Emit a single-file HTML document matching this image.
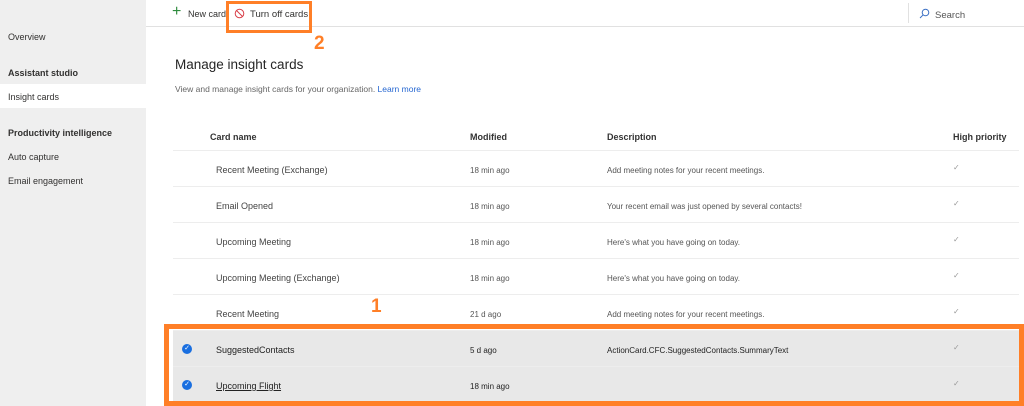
<!DOCTYPE html>
<html><head><meta charset="utf-8"><style>
*{margin:0;padding:0;box-sizing:border-box}
body{width:1024px;height:406px;overflow:hidden;background:#fff;font-family:"Liberation Sans",sans-serif;color:#323130;position:relative}
.side{position:absolute;left:0;top:0;width:146px;height:406px;background:#efefef;font-size:9px}
.side div{position:absolute;left:8px}
.top{position:absolute;left:146px;top:0;right:0;height:27px;border-bottom:1px solid #e1e1e1;font-size:9.5px}
.abs{position:absolute}
.row{position:absolute;left:173px;width:846px;height:36px;border-bottom:1px solid #ededed;font-size:8px;color:#555}
.row span{position:absolute;top:15px}
.row .n{left:43px;font-size:9px;color:#444;top:14px}
.row .m{left:297px}.row .d{left:434px}
.row .c{left:780px;top:12px;color:#999;font-size:8px}
.sel{background:#e8e8e8}
.dot{position:absolute;left:9px;top:13px;width:10px;height:10px;border-radius:50%;background:#1a6fe0;color:#fff;font-size:7px;line-height:10px;text-align:center}
</style></head><body>
<div class="side">
<div style="top:32px">Overview</div>
<div style="top:68px;font-weight:bold">Assistant studio</div>
<div style="left:0;top:84px;width:146px;height:24px;background:#fff"></div>
<div style="top:92px">Insight cards</div>
<div style="top:128px;font-weight:bold">Productivity intelligence</div>
<div style="top:152px">Auto capture</div>
<div style="top:176px">Email engagement</div>
</div>
<div class="top">
<div class="abs" style="left:26px;top:4px;color:#2e8b3e;font-size:16px;line-height:16px">+</div>
<div class="abs" style="left:42px;top:9px;font-size:9px">New card</div>
<svg class="abs" style="left:88px;top:8px" width="11" height="11" viewBox="0 0 11 11"><circle cx="5.5" cy="5.5" r="4.3" fill="none" stroke="#d9404a" stroke-width="1"/><line x1="2.5" y1="2.5" x2="8.5" y2="8.5" stroke="#d9404a"/></svg>
<div class="abs" style="left:104px;top:9px">Turn off cards</div>
<div class="abs" style="left:762px;top:3px;width:1px;height:20px;background:#e1e1e1"></div>
<svg class="abs" style="left:773px;top:8px" width="11" height="11" viewBox="0 0 11 11"><circle cx="6.5" cy="4.5" r="3.3" fill="none" stroke="#3a6fc4"/><line x1="4.2" y1="6.8" x2="1" y2="10" stroke="#3a6fc4"/></svg>
<div class="abs" style="left:789px;top:10px;color:#555">Search</div>
</div>
<div class="abs" style="left:226px;top:1px;width:86px;height:32px;border:3px solid #ff7f27"></div>
<div class="abs" style="left:314px;top:33px;color:#ff7f27;font-weight:bold;font-size:19px">2</div>
<div class="abs" style="left:175px;top:57px;font-size:13.5px;color:#252525">Manage insight cards</div>
<div class="abs" style="left:175px;top:84px;font-size:8.5px;color:#666">View and manage insight cards for your organization. <span style="color:#2667d1">Learn more</span></div>
<div class="row" style="top:115px;font-weight:bold;color:#333">
<span style="left:37px;top:17px;font-size:9px">Card name</span><span class="m" style="top:17px;font-size:9px">Modified</span><span class="d" style="top:17px;font-size:9px">Description</span><span style="left:780px;top:17px;font-size:9px">High priority</span></div>
<div class="row" style="top:151px"><span class="n">Recent Meeting (Exchange)</span><span class="m">18 min ago</span><span class="d">Add meeting notes for your recent meetings.</span><span class="c">✓</span></div>
<div class="row" style="top:187px"><span class="n">Email Opened</span><span class="m">18 min ago</span><span class="d">Your recent email was just opened by several contacts!</span><span class="c">✓</span></div>
<div class="row" style="top:223px"><span class="n">Upcoming Meeting</span><span class="m">18 min ago</span><span class="d">Here's what you have going on today.</span><span class="c">✓</span></div>
<div class="row" style="top:259px"><span class="n">Upcoming Meeting (Exchange)</span><span class="m">18 min ago</span><span class="d">Here's what you have going on today.</span><span class="c">✓</span></div>
<div class="row" style="top:295px"><span class="n">Recent Meeting</span><span class="m">21 d ago</span><span class="d">Add meeting notes for your recent meetings.</span><span class="c">✓</span></div>
<div class="row sel" style="top:331px"><div class="dot">✓</div><span class="n" style="color:#222">SuggestedContacts</span><span class="m" style="color:#222">5 d ago</span><span class="d" style="color:#222">ActionCard.CFC.SuggestedContacts.SummaryText</span><span class="c">✓</span></div>
<div class="row sel" style="top:367px"><div class="dot">✓</div><span class="n" style="color:#222;text-decoration:underline">Upcoming Flight</span><span class="m" style="color:#222">18 min ago</span><span class="c">✓</span></div>
<div class="abs" style="left:164px;top:324px;width:860px;height:82px;border:5px solid #ff7f27"></div>
<div class="abs" style="left:371px;top:296px;color:#ff7f27;font-weight:bold;font-size:19px">1</div>
</body></html>
